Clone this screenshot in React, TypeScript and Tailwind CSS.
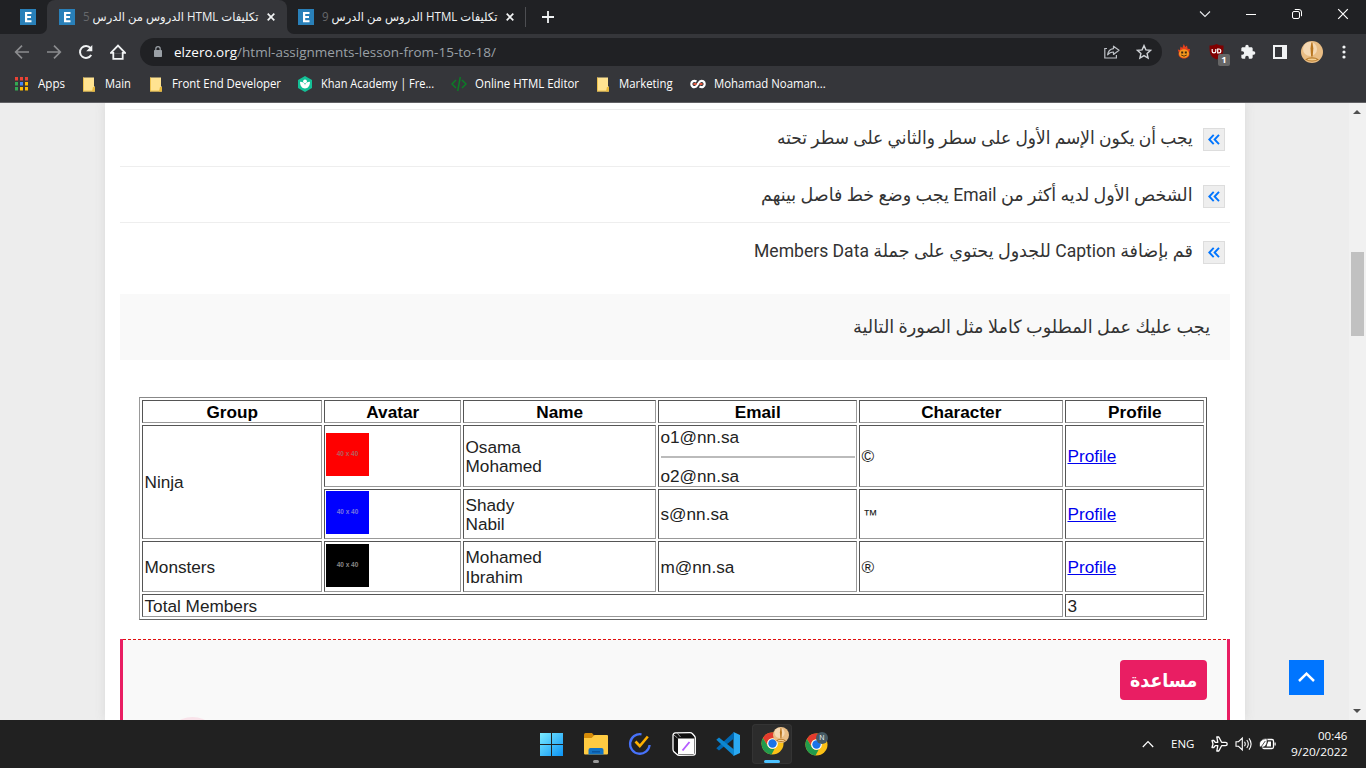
import { useLayoutEffect, useRef } from "react";
import type { ReactNode } from "react";

/* Condenses or stretches one line of text to the width its box was given. */
function Fit({ className, children }: { className: string; children: ReactNode }) {
  const outer = useRef<HTMLSpanElement>(null);
  const inner = useRef<HTMLSpanElement>(null);
  useLayoutEffect(() => {
    if (outer.current && inner.current) {
      const k = outer.current.clientWidth / inner.current.offsetWidth;
      inner.current.style.transform = `scaleX(${k})`;
    }
  }, []);
  return (
    <span ref={outer} className={`flex shrink-0 items-center ${className}`}>
      <span ref={inner} className="inline-block shrink-0 origin-left whitespace-nowrap rtl:origin-right">
        {children}
      </span>
    </span>
  );
}

function Favicon() {
  return (
    <svg width="16" height="16" viewBox="0 0 16 16" className="shrink-0">
      <rect width="16" height="16" fill="#2980b9" />
      <path d="M5 3h6.500v2H7.200v2H11v2H7.200v2.200h4.300v2H5z" fill="#fff" />
    </svg>
  );
}

function TabClose() {
  return (
    <svg width="8" height="8" viewBox="0 0 8 8" className="shrink-0">
      <path d="M.7.7l6.600 6.600M7.300.7L.7 7.300" stroke="#f1f3f4" strokeWidth="1.700" />
    </svg>
  );
}

function TabTitle({ n }: { n: string }) {
  return (
    <div dir="rtl" className="ml-2 mr-[9px] flex">
      <Fit className="h-4 w-[175px] font-['Open_Sans','DejaVu_Sans',sans-serif] text-[12px] leading-4 text-[#f1f3f4]">
        تكليفات HTML الدروس من الدرس <span className="text-[#66686b]">{n}</span>
      </Fit>
    </div>
  );
}

function TabStrip() {
  return (
    <div className="flex h-[34px] bg-[#202124]">
      <div className="flex w-[40px] items-center pl-5">
        <Favicon />
      </div>
      <div className="flex h-[34px] w-[254px]">
        <div className="flex w-[7px] items-end bg-[#35363a]">
          <div className="h-[34px] w-[7px] rounded-br-[7px] bg-[#202124]" />
        </div>
        <div className="flex w-[240px] items-center rounded-t-lg bg-[#35363a] pl-3">
          <Favicon />
          <TabTitle n="5" />
          <TabClose />
        </div>
        <div className="flex w-[7px] items-end bg-[#35363a]">
          <div className="h-[34px] w-[7px] rounded-bl-[7px] bg-[#202124]" />
        </div>
      </div>
      <div className="flex items-center pl-1">
        <Favicon />
        <TabTitle n="9" />
        <TabClose />
        <div className="ml-[11px] h-5 w-px bg-[#4d4e52]" />
        <svg width="12" height="12" viewBox="0 0 12 12" className="ml-4">
          <path d="M6 0v12M0 6h12" stroke="#f1f3f4" strokeWidth="1.800" />
        </svg>
      </div>
      <div className="ml-auto flex items-start pt-[8px]">
        <svg width="12" height="12" viewBox="0 0 12 12" className="mr-[34px]">
          <path d="M1 3.500l5 5 5-5" fill="none" stroke="#e8eaed" strokeWidth="1.100" />
        </svg>
        <svg width="12" height="12" viewBox="0 0 12 12" className="mr-[34px]">
          <path d="M1 6.500h10" stroke="#fff" strokeWidth="1" />
        </svg>
        <svg width="12" height="12" viewBox="0 0 12 12" className="mr-[34px]">
          <rect x="1.500" y="3.500" width="7" height="7" rx="1.500" fill="none" stroke="#fff" />
          <path d="M3.800 1.500h4.200a2.500 2.500 0 0 1 2.500 2.500v4.200" fill="none" stroke="#fff" />
        </svg>
        <svg width="12" height="12" viewBox="0 0 12 12" className="mr-[17px]">
          <path d="M1.200 1.200l9.600 9.600M10.800 1.200L1.200 10.800" stroke="#fff" strokeWidth="1.200" />
        </svg>
      </div>
    </div>
  );
}

function Portrait({ className }: { className: string }) {
  return (
    <svg viewBox="0 0 22 22" className={className}>
      <circle cx="11" cy="11" r="11" fill="#e9bd84" />
      <circle cx="9" cy="8" r="7" fill="#f5d9b4" />
      <path d="M10.300 1.500h1.200l.8 6-.6 8h-1.600l-.6-8z" fill="#b9761f" />
      <path d="M4 18.500q7-4.500 14 0-7 4-14 0z" fill="#b77a2a" />
      <ellipse cx="11" cy="18.500" rx="4.500" ry=".9" fill="#f4cf92" />
    </svg>
  );
}

function Toolbar() {
  return (
    <div className="flex h-9 items-center bg-[#35363a]">
      <svg width="16" height="16" viewBox="0 0 16 16" className="ml-[14px]">
        <path d="M15 8H2M8 1.700L1.700 8 8 14.300" fill="none" stroke="#8b8c8f" strokeWidth="1.700" />
      </svg>
      <svg width="16" height="16" viewBox="0 0 16 16" className="ml-4">
        <path d="M1 8h13M8 1.700L14.300 8 8 14.300" fill="none" stroke="#8b8c8f" strokeWidth="1.700" />
      </svg>
      <svg width="16" height="16" viewBox="0 0 16 16" className="ml-4">
        <path d="M13.200 11a6 6 0 1 1-.6-6.900" fill="none" stroke="#f1f3f4" strokeWidth="2" />
        <path d="M14.300 1v6.200H8.200z" fill="#f1f3f4" />
      </svg>
      <svg width="16" height="16" viewBox="0 0 16 16" className="ml-4">
        <path d="M3.300 8v6.800h9.400V8M.9 8.900L8 1.600l7.100 7.300z" fill="none" stroke="#f1f3f4" strokeWidth="1.800" />
        <path d="M4.200 7.800h7.600v2H4.200z" fill="#35363a" />
      </svg>
      <div className="ml-[14px] flex h-7 w-[1022px] items-center rounded-full bg-[#202124] pl-[14px] pr-[10px]">
        <svg width="8" height="11" viewBox="0 0 8 11" className="mb-px">
          <path d="M1.800 5V2.900a2.200 2.200 0 0 1 4.400 0V5" fill="none" stroke="#9aa0a6" strokeWidth="1.200" />
          <rect y="4" width="8" height="7" rx=".7" fill="#9aa0a6" />
        </svg>
        <Fit className="ml-3 h-5 w-[322px] font-['Open_Sans',sans-serif] text-[13.300px] leading-5 text-[#9aa0a6]">
          <span className="text-white">elzero.org</span>/html-assignments-lesson-from-15-to-18/
        </Fit>
        <svg width="16" height="14" viewBox="0 0 16 14" className="ml-auto">
          <path d="M3 3.500H.8V13h11.600v-3" fill="none" stroke="#bdc1c6" strokeWidth="1.200" />
          <path d="M9.500 1.200L15 5.300 9.500 9.400V7C6.800 7 5 7.900 3.600 9.800 4 6.500 6 4 9.500 3.600z" fill="none" stroke="#bdc1c6" strokeWidth="1.200" strokeLinejoin="round" />
        </svg>
        <svg width="16" height="16" viewBox="0 0 16 16" className="ml-4">
          <path d="M8 1.600l1.900 4.300 4.700.4-3.500 3.100 1 4.600L8 11.600 3.900 14l1-4.600-3.500-3.100 4.700-.4z" fill="none" stroke="#d0d3d7" strokeWidth="1.400" />
        </svg>
      </div>
      <svg width="14" height="16" viewBox="0 0 14 16" className="ml-[15px]">
        <path d="M6.800 0l1.500 3L10 1.500l.6 3.200L13 5l-.8 3.500c1.200 3.500-1.700 6-5.200 6s-6.400-2.500-5.200-6L.8 5.500 3 6l.5-3.500 1.800 1.500z" fill="#e8401c" />
        <ellipse cx="7" cy="9.500" rx="5" ry="4.300" fill="#f79a1d" />
        <path d="M4.200 7.500h2v2h-2zM7.800 7.500h2v2h-2z" fill="#3a2310" />
        <path d="M4.200 11q2.800 2.400 5.600 0" fill="none" stroke="#57320f" strokeWidth="1" />
      </svg>
      <div className="relative ml-[18px] h-4 w-[15px]">
        <svg width="15" height="16" viewBox="0 0 15 16">
          <path d="M7.500 0c2.200 1.200 4.500 1.500 7 1.500 0 7-.2 10.800-7 14C.7 12.300.5 8.500.5 1.500c2.500 0 4.800-.3 7-1.500z" fill="#800000" />
          <path d="M3.200 5v2.500q0 1.300 1.800 1.300t1.800-1.300V5M8.700 5v3.800h1.200q1.900 0 1.900-1.900T9.900 5z" fill="none" stroke="#fff" strokeWidth="1.200" />
        </svg>
        <span className="absolute left-[9px] top-[10px] flex h-3 w-3 items-center justify-center rounded-[2px] bg-[#666] font-['Open_Sans',sans-serif] text-[9.500px] font-bold leading-3 text-white">1</span>
      </div>
      <svg width="16" height="16" viewBox="0 0 24 24" className="ml-4">
        <path d="M20.500 11H19V7c0-1.100-.9-2-2-2h-4V3.500a2.500 2.500 0 0 0-5 0V5H4c-1.100 0-2 .9-2 2v3.800h1.500a2.700 2.700 0 0 1 0 5.400H2V20c0 1.100.9 2 2 2h3.800v-1.500a2.700 2.700 0 0 1 5.400 0V22H17c1.100 0 2-.9 2-2v-4h1.500a2.500 2.500 0 0 0 0-5z" fill="#f1f3f4" />
      </svg>
      <svg width="14" height="14" viewBox="0 0 14 14" className="ml-[17px]">
        <path fillRule="evenodd" d="M0 0h14v14H0zM2 2v10h7V2z" fill="#f1f3f4" />
      </svg>
      <Portrait className="ml-[14px] h-[22px] w-[22px]" />
      <svg width="4" height="16" viewBox="0 0 4 16" className="ml-[19px]">
        <g fill="#f1f3f4">
          <circle cx="2" cy="3" r="1.600" />
          <circle cx="2" cy="8" r="1.600" />
          <circle cx="2" cy="13" r="1.600" />
        </g>
      </svg>
    </div>
  );
}

function BookmarkFolder({ className }: { className: string }) {
  return (
    <svg width="12" height="15" viewBox="0 0 12 15" className={`shrink-0 ${className}`}>
      <path d="M0 .5h11v9h1v5H0z" fill="#ffe391" />
      <path d="M10 10h2v4.500h-3z" fill="#e8b93c" />
      <path d="M0 14h11M.5.5V14" stroke="#e8b93c" strokeOpacity=".8" />
    </svg>
  );
}

const appDots = ["#ea4335", "#ea4335", "#ea4335", "#34a853", "#4285f4", "#fbbc04", "#34a853", "#fbbc04", "#fbbc04"];

function Bookmarks() {
  return (
    <div className="flex h-[34px] items-start border-b border-[#616165] bg-[#35363a]">
      <div className="flex h-7 items-center font-['Open_Sans',sans-serif] text-[12px] leading-4 text-white">
        <svg width="13" height="14" viewBox="0 0 13 14" className="ml-[15px] shrink-0">
          {appDots.map((c, i) => (
            <rect key={i} x={(i % 3) * 5} y={Math.floor(i / 3) * 5} width="3" height="3.500" fill={c} />
          ))}
        </svg>
        <Fit className="ml-[10px] w-[27px]">Apps</Fit>
        <BookmarkFolder className="ml-[18px]" />
        <Fit className="ml-[10px] w-[26px]">Main</Fit>
        <BookmarkFolder className="ml-[19px]" />
        <Fit className="ml-[10px] w-[109px]">Front End Developer</Fit>
        <svg width="14" height="16" viewBox="0 0 14 16" className="ml-[17px] shrink-0">
          <path d="M7 0l7 4v8l-7 4-7-4V4z" fill="#14bf96" />
          <circle cx="7" cy="5.300" r="1.900" fill="#fff" />
          <path d="M2 5.800c3 0 5 1.400 5 3.600 0-2.200 2-3.600 5-3.600 0 4-2 6.700-5 6.700S2 9.800 2 5.800z" fill="#fff" />
        </svg>
        <Fit className="ml-[9px] w-[113px]">Khan Academy | Fre...</Fit>
        <svg width="16" height="16" viewBox="0 0 16 16" className="ml-[17px] shrink-0">
          <path d="M5 4L1 8l4 4M11 4l4 4-4 4M9.300 1L6.700 15" fill="none" stroke="#0b7d26" strokeWidth="1.500" />
        </svg>
        <Fit className="ml-2 w-[104px]">Online HTML Editor</Fit>
        <BookmarkFolder className="ml-[18px]" />
        <Fit className="ml-[10px] w-[54px]">Marketing</Fit>
        <svg width="16" height="10" viewBox="0 0 16 10" className="ml-[17px] shrink-0">
          <path d="M6.500 2.500C3.500.8 1.300 2.700 1.300 5s2.200 4.200 4.700 2.600L10 2.400C12.500.8 14.700 2.700 14.700 5s-2.200 4.200-5.200 2.500" fill="none" stroke="#fff" strokeWidth="2.200" />
          <path d="M3.500 5h3M9.500 5h3" stroke="#e1553b" strokeWidth="2" />
        </svg>
        <Fit className="ml-2 w-[112px]">Mohamad Noaman...</Fit>
      </div>
    </div>
  );
}

function ListRow({ className, width, children }: { className: string; width: string; children: ReactNode }) {
  return (
    <div dir="rtl" className={`flex shrink-0 items-start border-t border-[#eee] pr-[5px] ${className}`}>
      <div className="mt-[18px] flex h-[23px] w-[22px] items-center justify-center border border-[#ddd] bg-[#eee]">
        <svg width="12" height="11" viewBox="0 0 12 11">
          <path d="M5.700 .8L1.300 5.500l4.400 4.700M11 .8L6.600 5.500l4.400 4.700" fill="none" stroke="#0075ff" strokeWidth="1.900" />
        </svg>
      </div>
      <Fit className={`mr-[10px] mt-[14px] h-7 font-[Roboto,'DejaVu_Sans',sans-serif] text-[18px] leading-7 text-[#333] ${width}`}>
        {children}
      </Fit>
    </div>
  );
}

function Cell({ className, children }: { className?: string; children?: ReactNode }) {
  return (
    <div className={`flex flex-col justify-center border border-b-[#999] border-l-[#555] border-r-[#999] border-t-[#555] pl-[1.500px] pr-px pt-[2px] leading-[19.400px] ${className ?? ""}`}>
      {children}
    </div>
  );
}

function AvatarCell({ className }: { className: string }) {
  return (
    <div className="flex items-center border border-b-[#999] border-l-[#555] border-r-[#999] border-t-[#555] pb-[3px] pl-px">
      <div className={`flex h-[43px] w-[43px] items-center justify-center font-['Liberation_Sans',sans-serif] text-[6.500px] font-bold leading-none ${className}`}>
        40 x 40
      </div>
    </div>
  );
}

function ProfileLink() {
  return (
    <a className="text-[#0000ee] underline">
      <span>Profile</span>
    </a>
  );
}

function MembersTable() {
  const heads = ["Group", "Avatar", "Name", "Email", "Character", "Profile"];
  return (
    <div className="ml-[19px] mt-[37px] grid h-[223px] w-[1068px] shrink-0 grid-cols-[180px_137px_193px_199px_204px_139px] grid-rows-[23px_62px_50px_51px_23px] gap-[2px] border border-b-[#666] border-l-[#999] border-r-[#555] border-t-[#888] p-[2px] font-['Liberation_Sans',Arial,sans-serif] text-[17.200px] text-[#222]">
      {heads.map((h) => (
        <Cell key={h} className="items-center font-bold text-black">
          {h}
        </Cell>
      ))}
      <Cell className="row-span-2">Ninja</Cell>
      <AvatarCell className="bg-[#f00] text-[#b06060]" />
      <Cell>
        <span>Osama</span>
        <span>Mohamed</span>
      </Cell>
      <Cell>
        <span>o1@nn.sa</span>
        <div className="my-[9px] border-t-2 border-[#bbb]" />
        <span>o2@nn.sa</span>
      </Cell>
      <Cell>©</Cell>
      <Cell>
        <ProfileLink />
      </Cell>
      <AvatarCell className="bg-[#00f] text-[#7777dd]" />
      <Cell>
        <span>Shady</span>
        <span>Nabil</span>
      </Cell>
      <Cell>s@nn.sa</Cell>
      <Cell className="pl-[3px] text-[15px]">™</Cell>
      <Cell>
        <ProfileLink />
      </Cell>
      <Cell>Monsters</Cell>
      <AvatarCell className="bg-black text-[#888]" />
      <Cell>
        <span>Mohamed</span>
        <span>Ibrahim</span>
      </Cell>
      <Cell>m@nn.sa</Cell>
      <Cell>®</Cell>
      <Cell>
        <ProfileLink />
      </Cell>
      <Cell className="col-span-5">Total Members</Cell>
      <Cell>3</Cell>
    </div>
  );
}

function Page() {
  return (
    <main className="relative flex h-[617px] overflow-hidden bg-[#ededed]">
      <div className="ml-[105px] flex w-[1140px] shrink-0 flex-col bg-white px-[15px] pt-[6px] shadow-[0_0_10px_#d8d8d8]">
        <ListRow className="h-[57px]" width="w-[416px]">
          يجب أن يكون الإسم الأول على سطر والثاني على سطر تحته
        </ListRow>
        <ListRow className="h-[56px]" width="w-[432px]">
          الشخص الأول لديه أكثر من Email يجب وضع خط فاصل بينهم
        </ListRow>
        <ListRow className="h-[72px]" width="w-[439px]">
          قم بإضافة Caption للجدول يحتوي على جملة Members Data
        </ListRow>
        <div dir="rtl" className="flex h-[66px] shrink-0 items-center bg-[#f9f9f9] pr-5">
          <Fit className="h-7 w-[357px] font-[Roboto,'DejaVu_Sans',sans-serif] text-[18px] leading-7 text-[#333]">
            يجب عليك عمل المطلوب كاملا مثل الصورة التالية
          </Fit>
        </div>
        <MembersTable />
        <div className="relative mt-[19px] h-[90px] shrink-0 border-x-[3px] border-[#e91e63] bg-[#f9f9f9]">
          <svg width="1104" height="1" className="block">
            <path d="M0 .5h1104" stroke="#e01010" strokeDasharray="3 2" />
          </svg>
          <div dir="rtl" className="ml-auto mr-5 mt-5 flex h-10 w-[87px] items-center justify-center rounded bg-[#e91e63]">
            <Fit className="w-[67px] font-['DejaVu_Sans',sans-serif] text-[19px] font-bold leading-8 text-white">مساعدة</Fit>
          </div>
          <div className="absolute left-[42px] top-[78px] h-[55px] w-[55px] rounded-full bg-[#f9e3ea]" />
        </div>
      </div>
      <div className="absolute left-[1289px] top-[557px] flex h-[35px] w-[35px] items-center justify-center bg-[#0075ff] pb-[2px]">
        <svg width="17" height="10" viewBox="0 0 17 10">
          <path d="M1 9l7.500-7.300L16 9" fill="none" stroke="#fff" strokeWidth="2.500" />
        </svg>
      </div>
      <div className="ml-auto flex w-[17px] flex-col items-center bg-[#f1f1f1]">
        <svg width="8" height="4" viewBox="0 0 8 4" className="mr-px mt-[7px]">
          <path d="M4 0l4 4H0z" fill="#505050" />
        </svg>
        <div className="mt-[138px] h-[84px] w-[13px] bg-[#c1c1c1]" />
        <svg width="8" height="4" viewBox="0 0 8 4" className="mb-[7px] mr-px mt-auto">
          <path d="M4 4l4-4H0z" fill="#505050" />
        </svg>
      </div>
    </main>
  );
}

function Chrome() {
  return (
    <svg width="23" height="23" viewBox="0 0 24 24">
      <circle cx="12" cy="12" r="11.500" fill="#fbc116" />
      <path d="M2 6.300A11.500 11.500 0 0 1 22 6.500H12a5.500 5.500 0 0 0-4.800 8.200z" fill="#e33b2e" />
      <path d="M2 6.300l5.200 8.500A5.500 5.500 0 0 0 14.500 17L11 23.500A11.500 11.500 0 0 1 2 6.300z" fill="#229b4d" />
      <circle cx="12" cy="12" r="5.600" fill="#fff" />
      <circle cx="12" cy="12" r="4.400" fill="#1a73e8" />
    </svg>
  );
}

function Taskbar() {
  return (
    <footer className="flex h-12 items-center bg-[#212121]">
      <svg width="24" height="24" viewBox="0 0 24 24" className="ml-[540px]">
        <defs>
          <linearGradient id="win" x1="0" y1="0" x2="1" y2="1">
            <stop offset="0" stopColor="#7cecff" />
            <stop offset="1" stopColor="#0b93f5" />
          </linearGradient>
        </defs>
        <path d="M0 1h11v11H0zM12 1h11v11H12zM0 13h11v11H0zM12 13h11v11H12z" fill="url(#win)" />
      </svg>
      <div className="ml-5 flex h-12 w-6 flex-col items-center pt-[13px]">
        <svg width="24" height="22" viewBox="0 0 24 22" className="shrink-0">
          <path d="M0 1.500Q0 0 1.500 0H8l2.500 3-2 2H0z" fill="#d58b08" />
          <path d="M0 5h7.500L10.500 2H23q1 0 1 1v17.500q0 1-1 1H1q-1 0-1-1z" fill="#ffcb42" />
          <path d="M4.500 21.500v-4.500q0-2 2-2h11q2 0 2 2v4.500z" fill="#1273c4" />
          <path d="M8 18.800h8" stroke="#0a529a" strokeWidth="1.300" />
        </svg>
        <div className="mt-[5px] h-[3px] w-[6px] shrink-0 rounded-full bg-[#999]" />
      </div>
      <svg width="24" height="24" viewBox="0 0 24 24" className="ml-5">
        <path d="M13.500 2.300A9.800 9.800 0 1 0 21.600 13" fill="none" stroke="#4772fa" strokeWidth="2.300" />
        <path d="M7.500 9.500l4.300 4.500L19.800 4.500" fill="none" stroke="#ffb000" strokeWidth="2.600" />
      </svg>
      <svg width="24" height="24" viewBox="0 0 24 24" className="ml-5">
        <path d="M1 3.500Q1 1 3.500.9L18 .7q1.500 0 2.500 1l2 2.300q.8 1 .8 2v15q0 2-2 2.100l-14 .2q-1.500 0-2.500-1L1.700 19.500Q1 18.500 1 17z" fill="#111" stroke="#fff" strokeWidth="1.300" />
        <path d="M6 6.500h16.200v15.800H6z" fill="#fff" />
        <path d="M2 3l3.500 3M5.500 1.500l3 3.500" fill="none" stroke="#fff" strokeWidth=".6" />
        <path d="M10.500 18.500l7-8.500" stroke="#b55cff" strokeWidth="1.900" />
      </svg>
      <svg width="24" height="24" viewBox="0 0 24 24" className="ml-5">
        <path d="M17.500 0L24 3v18l-6.500 3z" fill="#2aa9f2" />
        <path d="M18 0v6.500L3 18.500.3 16.300z" fill="#0068b3" />
        <path d="M18 24v-6.500L3 5.500.3 7.700z" fill="#0d87d1" />
      </svg>
      <div className="relative ml-3 flex h-10 w-10 flex-col items-center rounded bg-[#2c2c2c] pt-2 shadow-[inset_0_0_0_1px_#343434]">
        <Chrome />
        <div className="mt-[5px] h-[3px] w-4 shrink-0 rounded-full bg-[#4cc2ff]" />
        <Portrait className="absolute left-[21px] top-[3px] h-4 w-4" />
      </div>
      <div className="relative ml-[13px] h-[23px] w-[23px]">
        <Chrome />
        <span className="absolute left-[11px] top-[-1px] flex h-3 w-3 items-center justify-center rounded-full bg-[#455a64] font-['Open_Sans',sans-serif] text-[7px] leading-3 text-white">N</span>
      </div>
      <svg width="12" height="8" viewBox="0 0 12 8" className="ml-auto">
        <path d="M.8 7L6 1.500 11.200 7" fill="none" stroke="#fff" strokeWidth="1.200" />
      </svg>
      <Fit className="ml-[17px] h-5 w-[23px] font-['Open_Sans',sans-serif] text-[11.500px] leading-5 text-white">ENG</Fit>
      <svg width="17" height="16" viewBox="0 0 17 16" className="ml-[17px]">
        <path d="M1 4.500h1.800L4.300 6.300H6.800L5.800 1h2L10.600 6.300h3.900a1.700 1.700 0 0 1 0 3.400h-3.900L7.800 15h-2l1-5.300H4.300L2.800 11.500H1L2 8z" fill="none" stroke="#fff" strokeWidth="1.300" strokeLinejoin="round" />
      </svg>
      <svg width="17" height="16" viewBox="0 0 17 16" className="ml-[7px]">
        <path d="M1 5.700h2.500L7.300 2v12L3.500 10.300H1zM9.500 5.800q1.500 2.200 0 4.400M11.800 4q3 4 0 8M14 2.300q4.200 5.700 0 11.400" fill="none" stroke="#fff" strokeWidth="1.100" />
      </svg>
      <svg width="17" height="12" viewBox="0 0 17 12" className="ml-[7px]">
        <rect x="3.500" y="1.500" width="11" height="9" rx="1.500" fill="none" stroke="#fff" strokeWidth="1.300" />
        <path d="M15.500 4.500h1.200v3h-1.200zM9 3.500h3v5H7.500z" fill="#fff" />
        <path d="M8 .5C3 1 0 3 .5 7.500c.2 1 1 1.800 2 1.800C7 9.300 8.500 6 8 .5z" fill="#fff" stroke="#212121" strokeWidth=".7" />
        <path d="M6.300 3L1 10.500" stroke="#212121" strokeWidth=".8" />
      </svg>
      <div className="ml-[15px] mr-[19px] flex flex-col items-end font-['Open_Sans',sans-serif] text-[11.500px] leading-4 text-white">
        <Fit className="h-4 w-[29px]">00:46</Fit>
        <Fit className="h-4 w-[56px]">9/20/2022</Fit>
      </div>
    </footer>
  );
}

export default function App() {
  return (
    <div className="h-[768px] w-[1366px] overflow-hidden">
      <TabStrip />
      <Toolbar />
      {/* The bookmark bar closes the browser chrome with a one-pixel rule. */}
      <div className="h-[33px] overflow-hidden bg-[#35363a]">
        <div className="flex h-[33px] flex-col justify-start border-b border-[#616165] [&>div]:border-b-0">
          <Bookmarks />
        </div>
      </div>
      <Page />
      <Taskbar />
    </div>
  );
}
